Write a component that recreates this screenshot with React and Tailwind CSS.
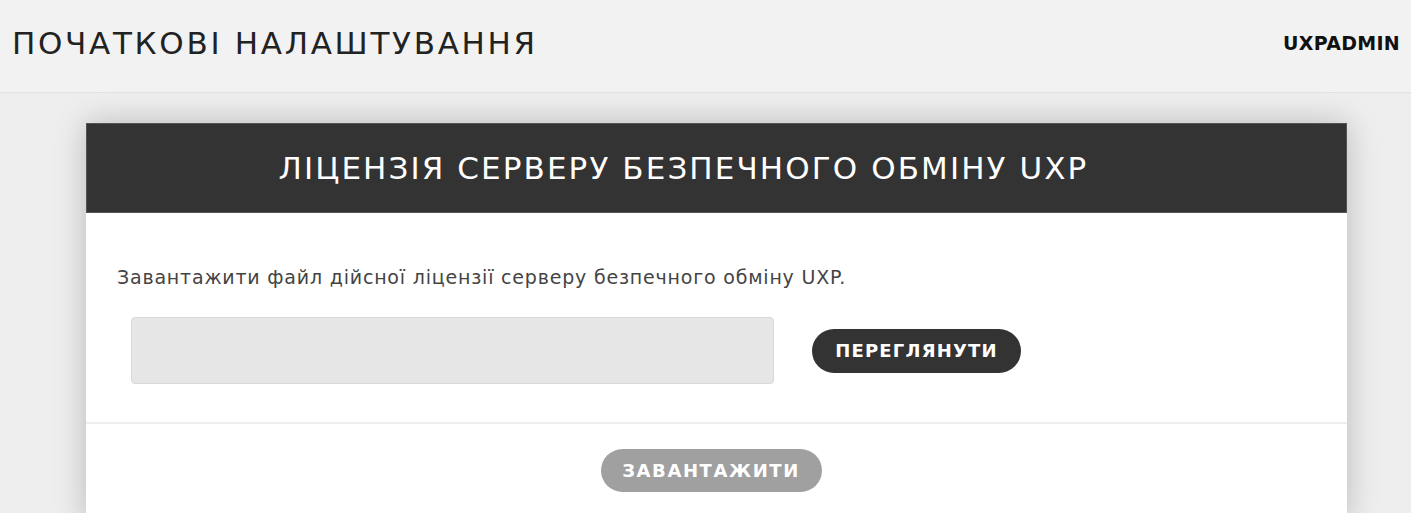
import React from 'react'

const LicensePage = () => {
    return (
        <div className="min-h-[513px] bg-[#eeeeee] font-['DejaVu_Sans',sans-serif] overflow-hidden">
            <div className="flex items-center justify-between h-[93px] bg-[#f2f2f2] border-b border-[#e2e2e2] pl-[12px] pr-[11px] pb-[5px]">
                <h1 className="text-[31px] font-normal text-[#222] tracking-[2.7px]">ПОЧАТКОВІ НАЛАШТУВАННЯ</h1>
                <span className="text-[19px] font-bold text-[#111] tracking-[0.3px]">UXPADMIN</span>
            </div>

            <div className="pt-[30px] pl-[86px] pr-[64px]">
                <div className="bg-white shadow-[0_0_30px_rgba(0,0,0,0.22)]">
                    <div className="h-[90px] bg-[#333333] flex items-center justify-center border border-[#555] pr-[66px]">
                        <h2 className="text-[31px] font-normal text-white tracking-[2.1px]">ЛІЦЕНЗІЯ СЕРВЕРУ БЕЗПЕЧНОГО ОБМІНУ UXP</h2>
                    </div>
                    <div className="px-[31px] pt-[52px] pb-[38px] border-b-2 border-[#eeeeee]">
                        <p className="text-[19px] text-[#444] leading-[24px] tracking-[0.8px]">
                            Завантажити файл дійсної ліцензії серверу безпечного обміну UXP.
                        </p>
                        <div className="flex items-center mt-[28px] pl-[14px]">
                            <input
                                type="text"
                                className="w-[643px] h-[67px] bg-[#e6e6e6] border border-[#d9d9d9] rounded-[4px]"
                            />
                            <button className="ml-[38px] w-[209px] h-[44px] rounded-full bg-[#333333] text-white text-[18px] font-bold tracking-[1.2px]">
                                ПЕРЕГЛЯНУТИ
                            </button>
                        </div>
                    </div>
                    <div className="flex justify-center pt-[25px] pb-[30px] pr-[11px]">
                        <button className="w-[221px] h-[43px] rounded-full bg-[#a0a0a0] text-white text-[18px] font-bold tracking-[1.6px]">
                            ЗАВАНТАЖИТИ
                        </button>
                    </div>
                </div>
            </div>
        </div>
    )
}

export default function App() {
    return <LicensePage />
}
